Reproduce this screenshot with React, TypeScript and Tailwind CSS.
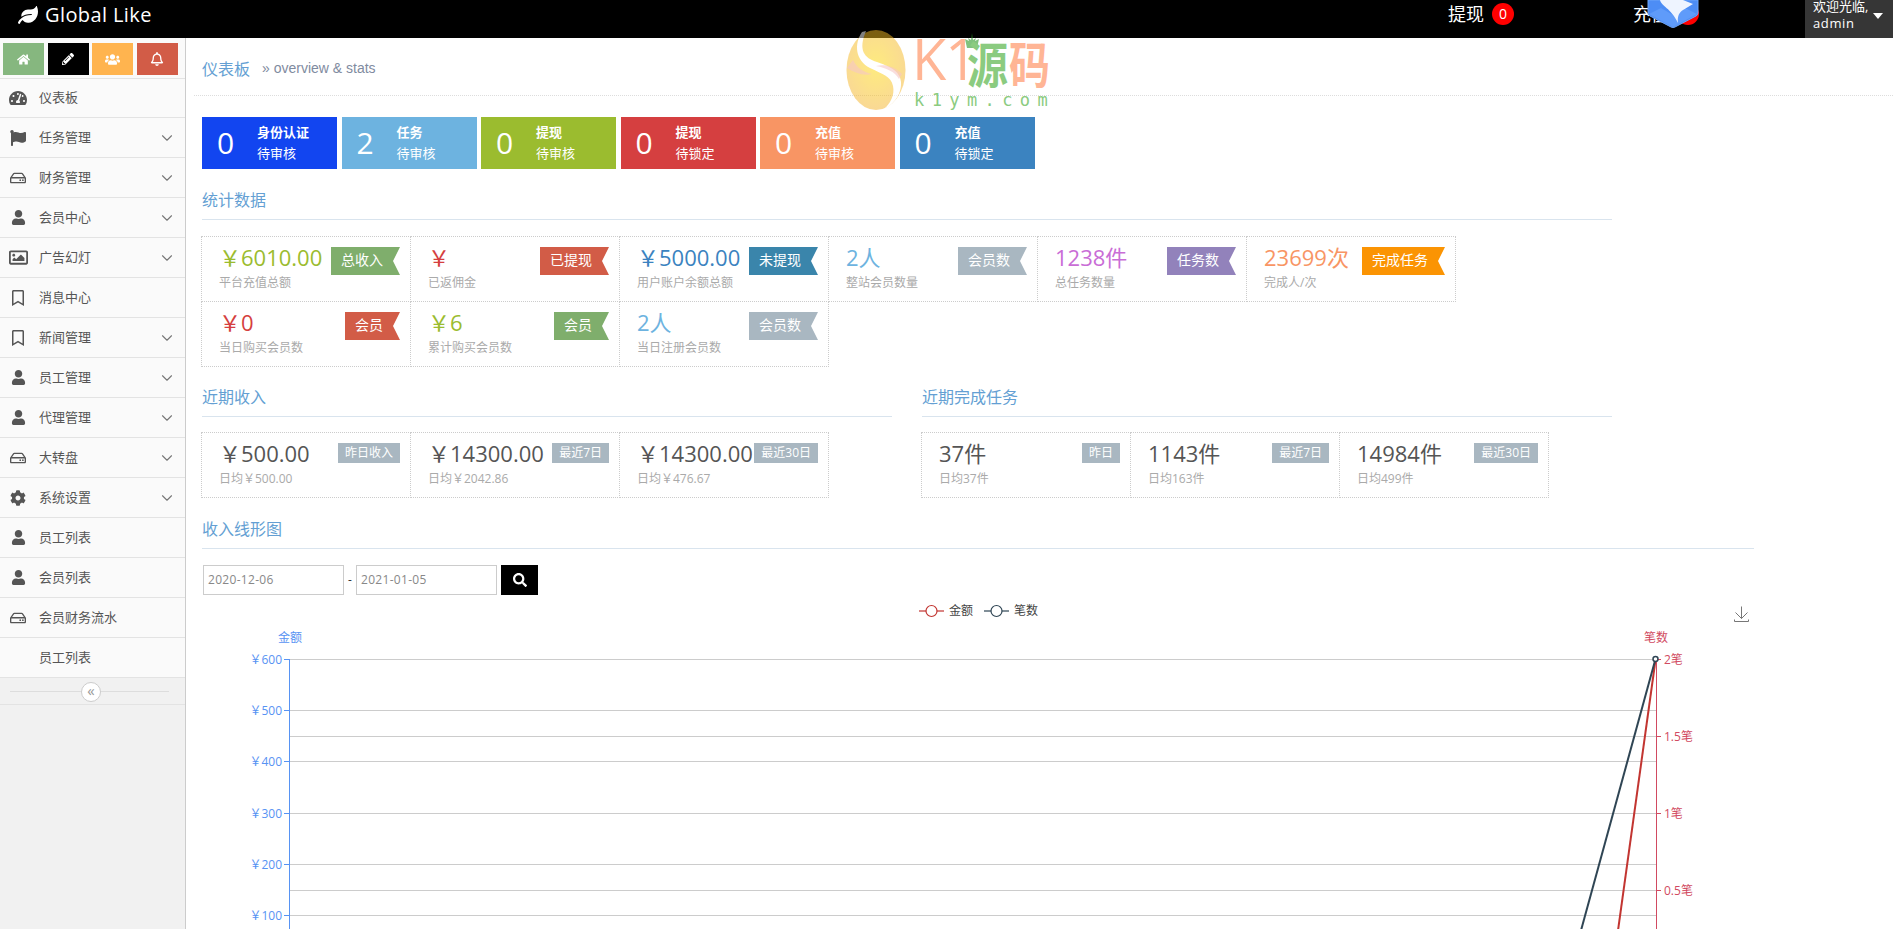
import {
  FaCog,
  FaFlag,
  FaHome,
  FaLeaf,
  FaPencilAlt,
  FaRegBell,
  FaRegBookmark,
  FaRegHdd,
  FaRegImage,
  FaSearch,
  FaTachometerAlt,
  FaUser,
  FaUsers,
} from 'react-icons/fa'
import { ChevronDown } from 'lucide-react'
import type { ReactNode } from 'react'

const fontStack = 'font-["Open_Sans","Noto_Sans_CJK_SC",sans-serif]'

interface NavItem {
  label: string
  icon?: ReactNode
  arrow?: boolean
}

const user = <FaUser size={15} />
const hdd = <FaRegHdd size={16} />
const mark = <FaRegBookmark size={16} />

const navItems: NavItem[] = [
  { label: '仪表板', icon: <FaTachometerAlt size={18} /> },
  { label: '任务管理', icon: <FaFlag size={16} />, arrow: true },
  { label: '财务管理', icon: hdd, arrow: true },
  { label: '会员中心', icon: user, arrow: true },
  { label: '广告幻灯', icon: <FaRegImage size={19} />, arrow: true },
  { label: '消息中心', icon: mark },
  { label: '新闻管理', icon: mark, arrow: true },
  { label: '员工管理', icon: user, arrow: true },
  { label: '代理管理', icon: user, arrow: true },
  { label: '大转盘', icon: hdd, arrow: true },
  { label: '系统设置', icon: <FaCog size={16} />, arrow: true },
  { label: '员工列表', icon: user },
  { label: '会员列表', icon: user },
  { label: '会员财务流水', icon: hdd },
  { label: '员工列表' },
]

const tiles = [
  { n: 0, a: '身份认证', b: '待审核', color: 'bg-[#1245f0]' },
  { n: 2, a: '任务', b: '待审核', color: 'bg-[#6db3e0]' },
  { n: 0, a: '提现', b: '待审核', color: 'bg-[#9bbc2f]' },
  { n: 0, a: '提现', b: '待锁定', color: 'bg-[#d53f40]' },
  { n: 0, a: '充值', b: '待审核', color: 'bg-[#f89564]' },
  { n: 0, a: '充值', b: '待锁定', color: 'bg-[#3b83c0]' },
]

const yen = '\uFFE5'

const stats = [
  { value: yen + '6010.00', label: '平台充值总额', tag: '总收入', text: 'text-[#9bbc2f]', bg: 'bg-[#7fae6c]' },
  { value: yen, label: '已返佣金', tag: '已提现', text: 'text-[#d53f40]', bg: 'bg-[#d25c47]' },
  { value: yen + '5000.00', label: '用户账户余额总额', tag: '未提现', text: 'text-[#3b83c0]', bg: 'bg-[#3a85ab]' },
  { value: '2人', label: '整站会员数量', tag: '会员数', text: 'text-[#6db3e0]', bg: 'bg-[#a9b7c1]' },
  { value: '1238件', label: '总任务数量', tag: '任务数', text: 'text-[#c96dd6]', bg: 'bg-[#9282bb]' },
  { value: '23699次', label: '完成人/次', tag: '完成任务', text: 'text-[#f89564]', bg: 'bg-[#fb9403]' },
  { value: yen + '0', label: '当日购买会员数', tag: '会员', text: 'text-[#d53f40]', bg: 'bg-[#d25c47]' },
  { value: yen + '6', label: '累计购买会员数', tag: '会员', text: 'text-[#9bbc2f]', bg: 'bg-[#7fae6c]' },
  { value: '2人', label: '当日注册会员数', tag: '会员数', text: 'text-[#6db3e0]', bg: 'bg-[#a9b7c1]' },
]

const income = [
  { value: yen + '500.00', label: '日均' + yen + '500.00', tag: '昨日收入' },
  { value: yen + '14300.00', label: '日均' + yen + '2042.86', tag: '最近7日' },
  { value: yen + '14300.00', label: '日均' + yen + '476.67', tag: '最近30日' },
]

const finished = [
  { value: '37件', label: '日均37件', tag: '昨日' },
  { value: '1143件', label: '日均163件', tag: '最近7日' },
  { value: '14984件', label: '日均499件', tag: '最近30日' },
]

function Header() {
  return (
    <header className="relative h-[38px] bg-black text-white flex items-start shrink-0">
      <FaLeaf size={20} className="ml-[18px] mt-[5px]" />
      <span className="ml-[7px] text-[20px] leading-[30px] tracking-[0.4px]">Global Like</span>
      <div className="ml-auto flex h-[38px]">
        <div className="w-[185px] flex items-start">
          <span className="text-[18px] leading-[28px]">提现</span>
          <span className="ml-2 mt-[3px] w-[22px] h-[22px] rounded-full bg-[#ff0000] text-center text-[14px] leading-[22px]">0</span>
        </div>
        <div className="w-[172px] flex items-start">
          <span className="text-[18px] leading-[28px]">充值</span>
          <span className="ml-[8px] mt-[3px] w-[22px] h-[22px] rounded-full bg-[#ff0000] text-center text-[14px] leading-[22px]">0</span>
        </div>
        <div className="w-[88px] h-[38px] bg-[#363636] pl-2 relative overflow-hidden text-[13px] leading-[17px]">
          <div className="-mt-[2px]">欢迎光临,</div>
          <div className="tracking-[0.6px]">admin</div>
          <span className="absolute left-[68px] top-[13px] w-0 h-0 border-x-[5px] border-x-transparent border-t-[6px] border-t-white" />
        </div>
      </div>
    </header>
  )
}

function Sidebar() {
  return (
    <aside className="w-[186px] shrink-0 bg-[#f1f1f1] border-r border-[#ccc]">
      <div className="h-[41px] bg-[#fafafa] flex pl-[3px] pt-[5px] gap-[3.67px] border-b border-[#e3e3e3] box-border">
        <div className="w-[41px] h-[32px] bg-[#86b77f] text-white flex items-center justify-center"><FaHome size={13} /></div>
        <div className="w-[41px] h-[32px] bg-black text-white flex items-center justify-center"><FaPencilAlt size={12} /></div>
        <div className="w-[41px] h-[32px] bg-[#ffb44f] text-white flex items-center justify-center"><FaUsers size={15} /></div>
        <div className="w-[41px] h-[32px] bg-[#d25c47] text-white flex items-center justify-center"><FaRegBell size={14} /></div>
      </div>
      {navItems.map((item, i) => (
        <div
          key={i}
          className={`${i === 0 ? 'h-[39px]' : 'h-[40px]'} bg-[#fafafa] border-b border-[#e3e3e3] flex items-center text-[13px] text-[#555]`}
        >
          <span className="w-[39px] flex justify-center pr-[3px] text-[#555]">{item.icon}</span>
          <span>{item.label}</span>
          {item.arrow && <ChevronDown size={18} strokeWidth={1.5} className="ml-auto mr-[9px] text-[#777]" />}
        </div>
      ))}
      <div className="h-[27px] border-b border-[#e3e3e3] flex items-center justify-center relative">
        <div className="w-[159px] h-px bg-[#ddd] -ml-[7px]" />
        <span className="absolute left-[81px] top-[4px] w-[20px] h-[20px] rounded-full bg-white border border-[#ccc] text-[#999] text-[15px] leading-[15px] text-center">«</span>
      </div>
    </aside>
  )
}

function SectionTitle({ children }: { children: ReactNode }) {
  return (
    <div className="mt-[17px] text-[16px] leading-[28px] text-[#649fd3] pb-[5px] border-b border-[#d9e4ee]">
      {children}
    </div>
  )
}

function Tile({ n, a, b, color }: { n: number; a: string; b: string; color: string }) {
  return (
    <div className={`${color} w-[135px] h-[52px] text-white flex items-center`}>
      <span className="w-[55px] pl-[15px] text-[30px] leading-[52px]">{n}</span>
      <div className="text-[13px] leading-[21px]">
        <div className="font-bold">{a}</div>
        <div>{b}</div>
      </div>
    </div>
  )
}

function StatCell({ value, label, tag, text, bg }: { value: string; label: string; tag: string; text: string; bg: string }) {
  return (
    <div className="relative w-[210px] h-[66px] -ml-px -mt-px border border-dotted border-[#ccc] pl-[17px] pt-[5px]">
      <div className={`${text} text-[22px] leading-[30px] whitespace-nowrap`}>{value}</div>
      <div className="text-[12px] leading-[16px] mt-[3px] text-[#aaa] whitespace-nowrap">{label}</div>
      <span className={`${bg} absolute right-[10px] top-[10px] h-[28px] pl-[10px] pr-[17px] text-white text-[14px] leading-[26px] whitespace-nowrap [clip-path:polygon(0_0,100%_0,calc(100%-7px)_50%,100%_100%,0_100%)]`}>
        {tag}
      </span>
    </div>
  )
}

function PlainCell({ value, label, tag }: { value: string; label: string; tag: string }) {
  return (
    <div className="relative w-[210px] h-[66px] -ml-px border border-dotted border-[#ccc] pl-[17px] pt-[5px]">
      <div className="text-[#555] text-[22px] leading-[30px] whitespace-nowrap">{value}</div>
      <div className="text-[12px] leading-[16px] mt-[3px] text-[#aaa] whitespace-nowrap">{label}</div>
      <span className="absolute right-[10px] top-[10px] h-[20px] px-[7px] bg-[#a9b7c1] text-white text-[12px] leading-[19px] whitespace-nowrap">
        {tag}
      </span>
    </div>
  )
}

const gridYs = [659.5, 710.5, 736.5, 761.5, 813.5, 864.5, 890.5, 915.5]

function Chart() {
  const left = [
    { t: yen + '600', y: 659.5 },
    { t: yen + '500', y: 710.5 },
    { t: yen + '400', y: 761.5 },
    { t: yen + '300', y: 813.5 },
    { t: yen + '200', y: 864.5 },
    { t: yen + '100', y: 915.5 },
  ]
  const right = [
    { t: '2笔', y: 659.5 },
    { t: '1.5笔', y: 736.5 },
    { t: '1笔', y: 813.5 },
    { t: '0.5笔', y: 890.5 },
  ]
  return (
    <svg viewBox="202 595 1552 340" width={1552} height={340} className="block" fontFamily='"Open Sans","Noto Sans CJK SC",sans-serif' fontSize={12}>
      {/* legend */}
      <line x1={919} x2={944} y1={611} y2={611} stroke="#c23531" strokeWidth={2} opacity={0.6} />
      <circle cx={931.5} cy={611} r={5.5} fill="#fff" stroke="#c23531" strokeWidth={1.2} />
      <text x={949} y={615} fill="#444">金额</text>
      <line x1={984} x2={1009} y1={611} y2={611} stroke="#2f4554" strokeWidth={2} opacity={0.6} />
      <circle cx={996.5} cy={611} r={5.5} fill="#fff" stroke="#2f4554" strokeWidth={1.2} />
      <text x={1014} y={615} fill="#444">笔数</text>

      {/* save icon */}
      <path d="M1734.500 619.500v2h14v-2M1741.500 606.500v12M1735.500 612.500l6 6 6-6" stroke="#777" strokeWidth={1} fill="none" />

      {gridYs.map(y => (
        <line key={y} x1={289} x2={1656} y1={y} y2={y} stroke="#ccc" />
      ))}

      <line x1={289.5} x2={289.5} y1={659} y2={935} stroke="#5793f3" />
      {left.map(l => (
        <g key={l.t}>
          <line x1={284} x2={289} y1={l.y} y2={l.y} stroke="#5793f3" />
          <text x={282} y={l.y + 4} textAnchor="end" fill="#5793f3">{l.t}</text>
        </g>
      ))}
      <text x={290} y={642} textAnchor="middle" fill="#5793f3">金额</text>

      <line x1={1656.5} x2={1656.5} y1={659} y2={935} stroke="#d14a61" />
      {right.map(r => (
        <g key={r.t}>
          <line x1={1657} x2={1661} y1={r.y} y2={r.y} stroke="#d14a61" />
          <text x={1664} y={r.y + 4} fill="#d14a61">{r.t}</text>
        </g>
      ))}
      <text x={1656} y={642} textAnchor="middle" fill="#d14a61">笔数</text>

      <line x1={1655.5} y1={660} x2={1616} y2={945} stroke="#c23531" strokeWidth={2} />
      <line x1={1655.5} y1={659} x2={1577} y2={945} stroke="#2f4554" strokeWidth={2} />
      <circle cx={1655.5} cy={659} r={2.5} fill="#fff" stroke="#2f4554" strokeWidth={1.5} />
    </svg>
  )
}

function Watermark() {
  return (
    <div className="absolute left-[846px] top-[30px] w-[204px] h-[82px] pointer-events-none">
      <svg width={60} height={80} viewBox="0 0 60 80" className="absolute left-0 top-0 opacity-50">
        <defs>
          <radialGradient id="egg" cx="50%" cy="45%" r="60%">
            <stop offset="0%" stopColor="#ffd800" />
            <stop offset="100%" stopColor="#f4b030" />
          </radialGradient>
        </defs>
        <ellipse cx={30} cy={40} rx={29.5} ry={40} fill="url(#egg)" />
        <path d="M16 2C8 14 9 30 24 38c12 6 21 8 23 18 2 9-3 18-9 23 8-3 18-14 17-27-1-12-13-16-24-20C18 28 12 20 20 1z" fill="#fff" />
        <path d="M1 38c8 5 16 8 25 6-9-2-15-6-19-14z" fill="#ef8f8f" opacity={0.6} />
        <path d="M30 36c9-2 18 0 26 8l-3 5c-4-7-12-11-23-13z" fill="#ef8f8f" opacity={0.6} />
      </svg>
      <span className="absolute left-[66px] top-[-10px] text-[56px] leading-[76px] tracking-[-1px] font-['Open_Sans'] text-[#ffb595]">K1</span>
      <svg width={16} height={16} viewBox="0 0 16 16" className="absolute left-[118px] top-[3px] opacity-60">
        <path d="M8 0l1 7 3-2-1 3 4-2-2 9H3L1 6l4 2-1-3 3 2z" fill="#2f9a2a" />
      </svg>
      <span className="absolute left-[121px] top-[5px] text-[41px] leading-[52px] scale-y-[1.2] font-bold font-['Noto_Sans_CJK_SC'] text-[#8bcb80]">源</span>
      <span className="absolute left-[163px] top-[5px] text-[41px] leading-[52px] scale-y-[1.2] font-bold font-['Noto_Sans_CJK_SC'] text-[#ffb595]">码</span>
      <span className="absolute left-[68px] top-[60px] text-[17px] leading-[20px] tracking-[7.4px] font-['DejaVu_Sans_Mono'] text-[#8bcb80] whitespace-nowrap">k1ym.com</span>
    </div>
  )
}

function HexBadge() {
  return (
    <svg width={52} height={30} viewBox="0 0 52 30" className="absolute left-[1647px] top-0">
      <path d="M1 0v13q0 2 2 3l21 11q2 1 4 0l21-11q2-1 2-3V0z" fill="#4d8df5" stroke="#6ea5f7" strokeWidth={1} />
      <path d="M2 14l12-6 12 7 12-7 12 6-24 13z" fill="#5f9bfa" />
      <path d="M13 0C14 6 24 8 31 23 30 15 33 12 36 10L46 4 36 0z" fill="#eef4ff" />
    </svg>
  )
}

export default function App() {
  return (
    <div className={`relative w-[1893px] h-[929px] overflow-hidden bg-white flex flex-col ${fontStack}`}>
      <Header />
      <div className="flex flex-1 min-h-0">
        <Sidebar />
        <main className="flex-1 min-w-0">
          <div className="ml-2 pl-2 h-[58px] border-b border-dotted border-[#ddd] flex items-center pt-[4px]">
            <span className="text-[16px] text-[#649fd3]">仪表板</span>
            <span className="ml-[12px] text-[14px] font-['Liberation_Sans'] text-[#7f8ba0]">» overview &amp; stats</span>
          </div>
          <div className="pl-4">
            <div className="flex gap-[4.5px] mt-[21px]">
              {tiles.map((t, i) => <Tile key={i} {...t} />)}
            </div>

            <div className="w-[1410px]">
              <SectionTitle>统计数据</SectionTitle>
            </div>
            <div className="mt-[16px] pt-px flex flex-wrap w-[1260px]">
              {stats.map((s, i) => <StatCell key={i} {...s} />)}
            </div>

            <div className="w-[1410px] grid grid-cols-2 gap-x-[30px] -mt-px">
              <div>
                <SectionTitle>近期收入</SectionTitle>
                <div className="mt-[15px] flex">
                  {income.map((s, i) => <PlainCell key={i} {...s} />)}
                </div>
              </div>
              <div>
                <SectionTitle>近期完成任务</SectionTitle>
                <div className="mt-[15px] flex">
                  {finished.map((s, i) => <PlainCell key={i} {...s} />)}
                </div>
              </div>
            </div>

            <div className="w-[1552px]">
              <SectionTitle>收入线形图</SectionTitle>
            </div>
            <div className="mt-4 flex items-center h-[30px] text-[12px] font-['Open_Sans']">
              <div className="ml-px w-[141px] h-[30px] border border-[#ccc] text-[#888] pl-[4px] leading-[28px] tracking-[0.3px]">2020-12-06</div>
              <span className="w-[12px] text-center text-[#333]">-</span>
              <div className="w-[141px] h-[30px] border border-[#ccc] text-[#888] pl-[4px] leading-[28px] tracking-[0.3px]">2021-01-05</div>
              <div className="ml-1 w-[37px] h-[30px] bg-black text-white flex items-center justify-center"><FaSearch size={14} /></div>
            </div>
            <Chart />
          </div>
        </main>
      </div>
      <Watermark />
      <HexBadge />
    </div>
  )
}
